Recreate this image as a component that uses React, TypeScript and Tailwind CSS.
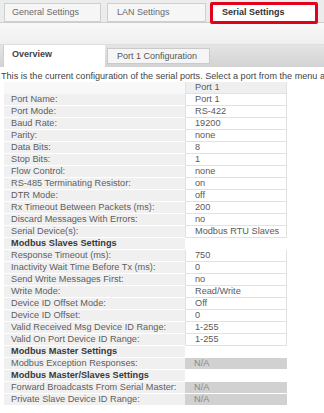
type Row =
   | { kind: "head"; value: string }
   | { kind: "row"; label: string; value: string }
   | { kind: "section"; label: string }
   | { kind: "na"; label: string };

const rows: Row[] = [
   { kind: "head", value: "Port 1" },
   { kind: "row", label: "Port Name:", value: "Port 1" },
   { kind: "row", label: "Port Mode:", value: "RS-422" },
   { kind: "row", label: "Baud Rate:", value: "19200" },
   { kind: "row", label: "Parity:", value: "none" },
   { kind: "row", label: "Data Bits:", value: "8" },
   { kind: "row", label: "Stop Bits:", value: "1" },
   { kind: "row", label: "Flow Control:", value: "none" },
   { kind: "row", label: "RS-485 Terminating Resistor:", value: "on" },
   { kind: "row", label: "DTR Mode:", value: "off" },
   { kind: "row", label: "Rx Timeout Between Packets (ms):", value: "200" },
   { kind: "row", label: "Discard Messages With Errors:", value: "no" },
   { kind: "row", label: "Serial Device(s):", value: "Modbus RTU Slaves" },
   { kind: "section", label: "Modbus Slaves Settings" },
   { kind: "row", label: "Response Timeout (ms):", value: "750" },
   { kind: "row", label: "Inactivity Wait Time Before Tx (ms):", value: "0" },
   { kind: "row", label: "Send Write Messages First:", value: "no" },
   { kind: "row", label: "Write Mode:", value: "Read/Write" },
   { kind: "row", label: "Device ID Offset Mode:", value: "Off" },
   { kind: "row", label: "Device ID Offset:", value: "0" },
   { kind: "row", label: "Valid Received Msg Device ID Range:", value: "1-255" },
   { kind: "row", label: "Valid On Port Device ID Range:", value: "1-255" },
   { kind: "section", label: "Modbus Master Settings" },
   { kind: "na", label: "Modbus Exception Responses:" },
   { kind: "section", label: "Modbus Master/Slaves Settings" },
   { kind: "na", label: "Forward Broadcasts From Serial Master:" },
   { kind: "na", label: "Private Slave Device ID Range:" },
];

function TableRow({ row }: { row: Row }) {
   if (row.kind === "head") {
      return (
         <div className="flex h-[12px]">
            <div className="ml-[4px] w-[181px] bg-[#f8f8f8]" />
            <div className="w-[102px] border-x border-b border-[#e2e2e2] bg-[#efefef] pl-[9px] text-[#5a5a5a]">
               {row.value}
            </div>
         </div>
      );
   }
   const label =
      row.kind === "section" ? (
         <div className="ml-[4px] w-[181px] border-b border-white bg-[#f0f0f0] pl-[7px] font-bold text-[#3a3a3a]">
            {row.label}
         </div>
      ) : (
         <div className="ml-[4px] w-[181px] border-b border-white bg-[#f0f0f0] pl-[7px] text-[#5e5e5e]">
            {row.label}
         </div>
      );
   return (
      <div className="flex h-[12px]">
         {label}
         {row.kind === "row" && (
            <div className="w-[102px] border-x border-b border-[#e2e2e2] bg-white pl-[9px] text-[#5a5a5a]">
               {row.value}
            </div>
         )}
         {row.kind === "section" && <div className="w-[102px] bg-white" />}
         {row.kind === "na" && (
            <div className="w-[102px] border-b border-white bg-[#d1d1d1] pl-[9px] text-[#888]">N/A</div>
         )}
      </div>
   );
}

export default function App() {
   return (
      <div className="h-[413px] w-[324px] overflow-hidden bg-white font-['Liberation_Sans',Arial,sans-serif]">
         {/* main tabs */}
         <div className="flex h-[23px] border-b border-[#cdcdcd] bg-[#ececec] text-[9px] leading-[17px]">
            <div className="ml-[4px] mt-[3px] h-[19px] w-[97px] border border-[#cfcfcf] bg-[#f6f6f6] pl-[7px] text-[#6a6a6a]">
               General Settings
            </div>
            <div className="ml-[6px] mt-[3px] h-[19px] w-[99px] border border-[#cfcfcf] bg-[#f6f6f6] pl-[9px] text-[#6a6a6a]">
               LAN Settings
            </div>
            <div className="ml-[4px] mt-[2px] h-[22px] w-[108px] rounded-[2px] border-[3px] border-[#e3001b] bg-white pl-[9px] font-bold leading-[14px] text-[#333]">
               Serial Settings
            </div>
         </div>
         <div className="h-[22px] border-b border-[#dedede] bg-gradient-to-b from-[#f8f8f8] to-[#efefef]" />

         {/* sub tabs */}
         <div className="flex h-[22px] items-start bg-gradient-to-b from-[#e4e4e4] to-[#d3d3d3] text-[9px]">
            <div className="ml-[3px] h-[22px] w-[102px] border-l border-[#cfcfcf] bg-white pl-[8px] pt-[4px] font-bold leading-[11px] text-[#444]">
               Overview
            </div>
            <div className="ml-[2px] mt-[3px] h-[16px] w-[103px] border border-[#cacaca] bg-[#f5f5f5] pl-[9px] leading-[14px] text-[#555]">
               Port 1 Configuration
            </div>
         </div>

         <p className="overflow-hidden whitespace-nowrap pl-[1px] pt-[4px] text-[9.1px] leading-[11px] text-[#444]">
            This is the current configuration of the serial ports. Select a port from the menu a
         </p>

         <div className="text-[9.2px] leading-[11px]">
            {rows.map((row, i) => (
               <TableRow key={i} row={row} />
            ))}
         </div>
      </div>
   );
}
